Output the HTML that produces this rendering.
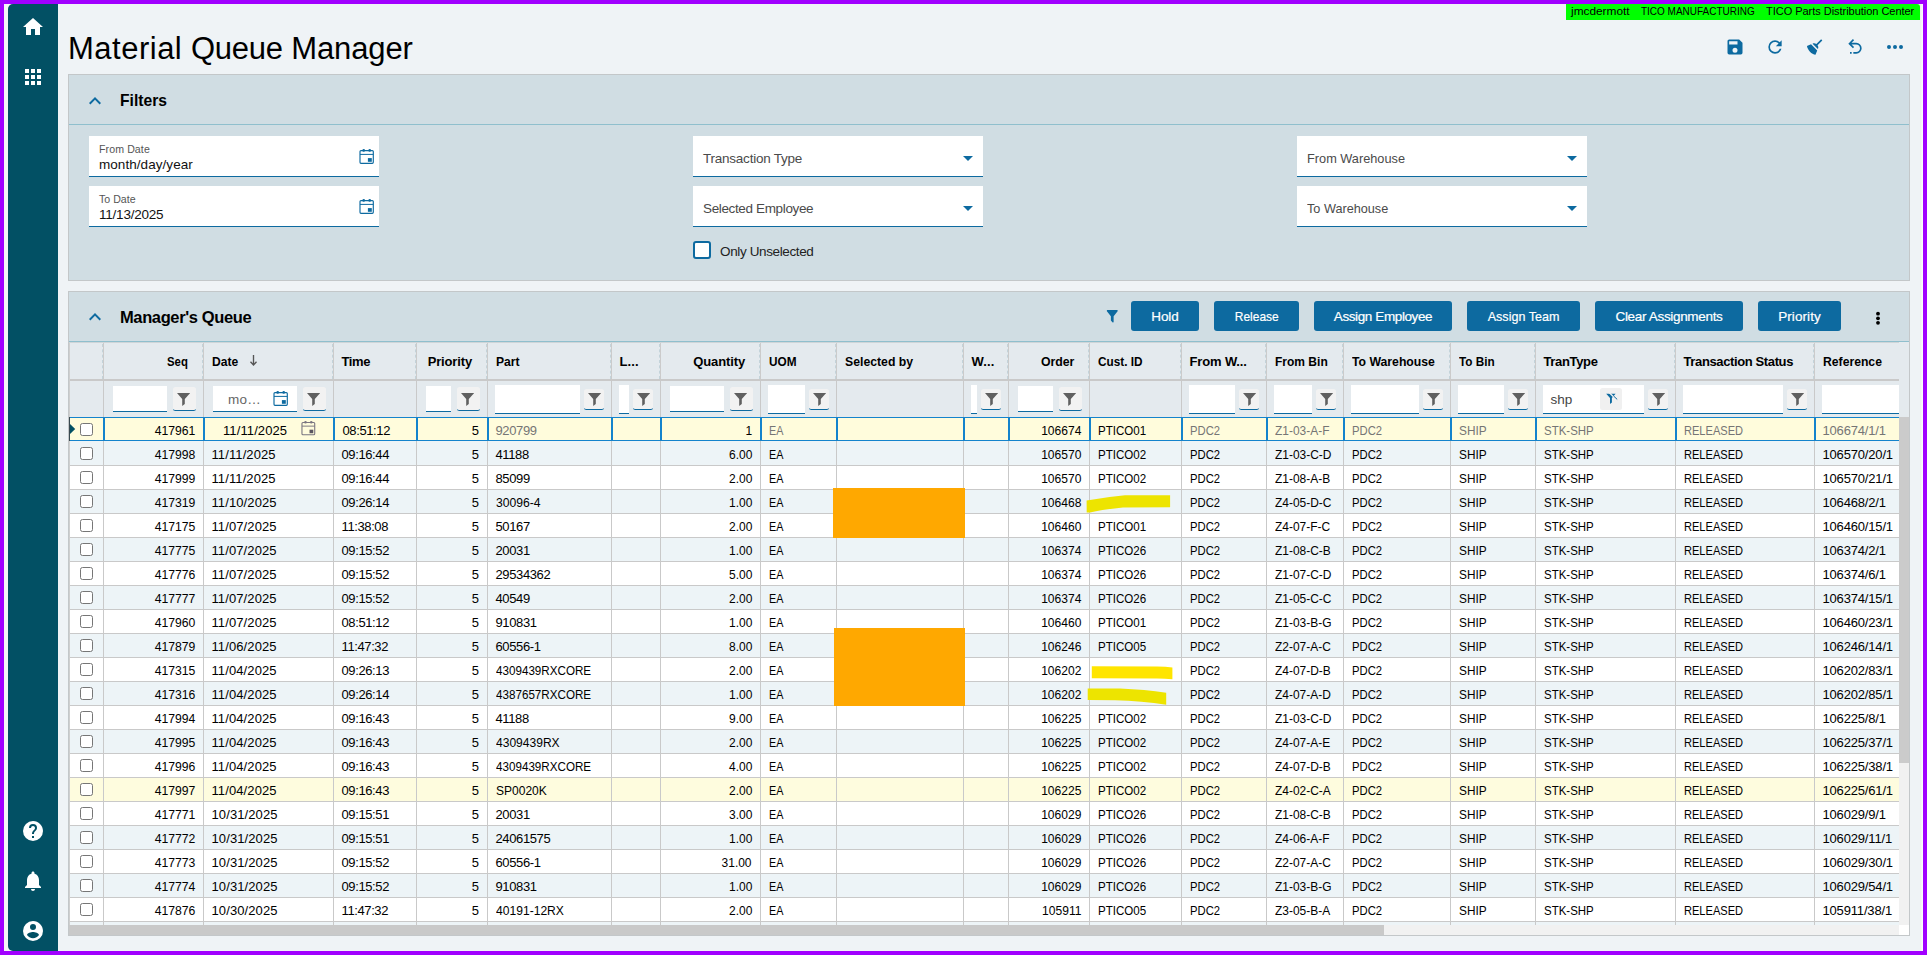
<!DOCTYPE html>
<html lang="en"><head><meta charset="utf-8"><title>Material Queue Manager</title>
<style>
*{box-sizing:border-box;margin:0;padding:0}
html,body{width:1927px;height:955px;overflow:hidden}
body{position:relative;background:#a100ff;font-family:"Liberation Sans",sans-serif;color:#000;font-size:13px}
.abs{position:absolute}
#frame{position:absolute;left:4px;top:4px;width:1919px;height:947px;background:#f6f6f6;overflow:hidden}
#main{position:absolute;left:54px;top:0;width:1862px;height:947px;background:#eff3f6}
#side{position:absolute;left:4px;top:0;width:50px;height:947px;background:#025064;border-radius:5px 0 0 5px}
#side svg{position:absolute;fill:#fff}
#banner{position:absolute;left:1566px;top:4px;width:354px;height:16px;background:#00ff00;border-radius:0 3px 0 0;font-size:11px;line-height:15px;white-space:nowrap}
#banner span{position:absolute;top:0}
#title{position:absolute;left:68px;top:28.5px;font-size:31px;line-height:40px;white-space:nowrap}
.panel{position:absolute;left:68px;width:1842px;background:#d0dde3;border:1px solid #c3c7c9}
.ptitle{position:absolute;font-weight:bold;font-size:16.5px;white-space:nowrap}
.pline{position:absolute;left:69px;width:1840px;height:1px;background:#8fbfcd}
.field{position:absolute;width:290px;height:41px;background:#fff;border-bottom:1px solid #0d6aa0}
.field .lab{position:absolute;left:10px;top:7px;font-size:10.6px;line-height:12px;color:#555;white-space:nowrap}
.field .val{position:absolute;left:10px;top:20.5px;font-size:13.5px;line-height:16px;color:#111;white-space:nowrap}
.field .ph{position:absolute;left:10px;top:14px;font-size:13.5px;line-height:18px;color:#4a4a4a;white-space:nowrap}
.field svg{position:absolute}
.btn{position:absolute;top:301px;height:30px;background:#0d6aa0;border-radius:3px;color:#fff;font-size:13.5px;line-height:32px;text-align:center;white-space:nowrap;overflow:hidden;-webkit-text-stroke:0.2px #fff}
#grid{position:absolute;left:70px;top:342px;width:1829px;height:583px;overflow:hidden;background:#fff}
.hrow{position:absolute;left:0;top:0;width:1900px;height:39px;background:#e4eaee;border-bottom:2px solid #c9c9c9}
.hc{position:absolute;top:0;height:37px;border-right:1px solid #cbcbcb;line-height:37px;font-weight:bold;font-size:13px;padding:1px 15px 0 7.5px;white-space:nowrap;overflow:hidden}
.hc.r{text-align:right}
.hc .sort{position:absolute;left:45.8px;top:13px}
.frow{position:absolute;left:0;top:39px;width:1900px;height:36px;background:#e4eaee}
.fc{position:absolute;top:0;height:36px;border-right:1px solid #c9c9c9}
.fi{position:absolute;background:#fff;border-bottom:1px solid #0d6aa0}
.fb{position:absolute;background:#f2f2f2;border-bottom:1px solid #0d6aa0;border-radius:2.5px;overflow:hidden}
.fb svg,.fi svg{position:absolute}
.row{position:absolute;left:0;width:1900px;height:24px}
.row.wh{background:#fff}.row.alt{background:#edf4f7}.row.hov{background:#fefcde}.row.sel{background:#fffcdc}
.c{position:absolute;top:0;height:24px;border-right:1px solid #c9c9c9;border-top:1px solid #c9c9c9;line-height:24px;padding:1px 8px 0 7.5px;white-space:nowrap;overflow:hidden;font-size:13px}
.row.first .c{border-top:0;padding-top:2px}
.c.r{text-align:right;padding-right:8px}
.cb{position:absolute;left:10px;top:5px;width:13px;height:13px;border:1px solid #767676;border-radius:2.5px;background:#fff}
.row.first .cb{top:6px}
.row.sel .c{border-top:1px solid #1483cc;border-bottom:1px solid #1483cc;border-right:1px solid #1483cc;border-left:1px solid #1483cc;line-height:22px;padding:2px 8px 0 7.5px;color:#757575}
.row.sel .c.c0{border-left:0}
.row.sel .cb{top:5px;left:10px}
.row.sel .c .t{margin-left:-1px}
.row.sel .c.r .t{margin-left:0}
.row.sel .c.k{color:#000}
.cal2{position:absolute;left:96px;top:3.6px}
.t{transform-origin:0 50%}
.r .t{transform-origin:100% 50%}
.btn .t{transform-origin:50% 50%}
.hc::after{content:'';position:absolute;right:0;top:2px;bottom:0;width:0;border-right:1px dashed #c3d3da}

.k-title{letter-spacing:-0.015px}
.k-ptf{display:inline-block;transform:scaleX(0.9473)}
.k-ptm{letter-spacing:-0.378px}
.k-lab0{letter-spacing:0.094px}
.k-lab1{letter-spacing:0.014px}
.k-val0{letter-spacing:0.057px}
.k-val1{letter-spacing:-0.22px}
.k-ph0{letter-spacing:-0.234px}
.k-ph1{letter-spacing:-0.358px}
.k-ph2{display:inline-block;transform:scaleX(0.9445)}
.k-ph3{display:inline-block;transform:scaleX(0.9385)}
.k-only{letter-spacing:-0.369px}
.k-b0{letter-spacing:-0.122px}
.k-b1{display:inline-block;transform:scaleX(0.8852)}
.k-b2{letter-spacing:-0.394px}
.k-b3{display:inline-block;transform:scaleX(0.9297)}
.k-b4{letter-spacing:-0.329px}
.k-b5{letter-spacing:0.083px}
.k-ban1{display:inline-block;transform:scaleX(1.0765)}
.k-ban2{display:inline-block;transform:scaleX(0.9071)}
.k-ban3{letter-spacing:-0.03px}
.k-h1{display:inline-block;transform:scaleX(0.8745)}
.k-h2{display:inline-block;transform:scaleX(0.9305)}
.k-h3{letter-spacing:-0.37px}
.k-h4{letter-spacing:-0.145px}
.k-h5{display:inline-block;transform:scaleX(0.934)}
.k-h6{letter-spacing:0.106px}
.k-h7{letter-spacing:-0.119px}
.k-h8{display:inline-block;transform:scaleX(0.9075)}
.k-h9{display:inline-block;transform:scaleX(0.9427)}
.k-h10{letter-spacing:0.136px}
.k-h11{display:inline-block;transform:scaleX(0.9468)}
.k-h12{display:inline-block;transform:scaleX(0.9066)}
.k-h13{letter-spacing:-0.138px}
.k-h14{display:inline-block;transform:scaleX(0.9241)}
.k-h15{display:inline-block;transform:scaleX(0.941)}
.k-h16{display:inline-block;transform:scaleX(0.9051)}
.k-h17{letter-spacing:-0.349px}
.k-h18{letter-spacing:-0.377px}
.k-h19{display:inline-block;transform:scaleX(0.9372)}
.k-d1{display:inline-block;transform:scaleX(0.9386)}
.k-d2{letter-spacing:0.107px}
.k-d3{letter-spacing:-0.387px}
.k-d5{letter-spacing:-0.372px}
.k-d7{display:inline-block;transform:scaleX(0.9217)}
.k-d8{display:inline-block;transform:scaleX(0.8285)}
.k-d11{display:inline-block;transform:scaleX(0.9271)}
.k-d12{display:inline-block;transform:scaleX(0.8903)}
.k-d13{display:inline-block;transform:scaleX(0.8664)}
.k-d14{display:inline-block;transform:scaleX(0.919)}
.k-d15{display:inline-block;transform:scaleX(0.8664)}
.k-d16{display:inline-block;transform:scaleX(0.9108)}
.k-d17{display:inline-block;transform:scaleX(0.8829)}
.k-d18{display:inline-block;transform:scaleX(0.8513)}
.k-d19{letter-spacing:-0.17px}
.k-p0{display:inline-block;transform:scaleX(0.8956)}
.k-p1{display:inline-block;transform:scaleX(0.8956)}
.k-p2{display:inline-block;transform:scaleX(0.9266)}
.k-p3{display:inline-block;transform:scaleX(0.9252)}
.k-p4{display:inline-block;transform:scaleX(0.9305)}
.k-p5{letter-spacing:-0.386px}
.k-p6{display:inline-block;transform:scaleX(0.9352)}
.k-p7{letter-spacing:-0.378px}
.k-p8{letter-spacing:-0.378px}
</style></head><body>
<div id="frame"><div class="abs" style="left:1916px;top:0;width:3px;height:947px;background:linear-gradient(90deg,#eee,#fff)"></div><div id="main"></div><div id="side">
</div></div>
<svg class="abs" style="left:21px;top:15px" width="24" height="24" viewBox="0 0 24 24" ><path fill="#fff" d="M10,20V14H14V20H19V12H22L12,3L2,12H5V20H10Z"/></svg>
<svg class="abs" style="left:21px;top:65px" width="24" height="24" viewBox="0 0 24 24" ><path fill="#fff" d="M16,20H20V16H16M16,14H20V10H16M10,8H14V4H10M16,8H20V4H16M10,14H14V10H10M4,14H8V10H4M4,20H8V16H4M10,20H14V16H10M4,8H8V4H4V8Z"/></svg>
<svg class="abs" style="left:21px;top:819px" width="24" height="24" viewBox="0 0 24 24" ><path fill="#fff" d="M15.07,11.25L14.17,12.17C13.45,12.89 13,13.5 13,15H11V14.5C11,13.39 11.45,12.39 12.17,11.67L13.41,10.41C13.78,10.05 14,9.55 14,9C14,7.89 13.1,7 12,7A2,2 0 0,0 10,9H8A4,4 0 0,1 12,5A4,4 0 0,1 16,9C16,9.88 15.64,10.67 15.07,11.25M13,19H11V17H13M12,2A10,10 0 0,0 2,12A10,10 0 0,0 12,22A10,10 0 0,0 22,12C22,6.47 17.5,2 12,2Z"/></svg>
<svg class="abs" style="left:21px;top:868.5px" width="24" height="24" viewBox="0 0 24 24" ><path fill="#fff" d="M12 22c1.1 0 2-.9 2-2h-4c0 1.1.89 2 2 2zm6-6v-5c0-3.07-1.64-5.64-4.5-6.32V4c0-.83-.67-1.5-1.5-1.5s-1.5.67-1.5 1.5v.68C7.63 5.36 6 7.92 6 11v5l-2 2v1h16v-1l-2-2z"/></svg>
<svg class="abs" style="left:21px;top:918.5px" width="24" height="24" viewBox="0 0 24 24" ><path fill="#fff" d="M12,19.2C9.5,19.2 7.29,17.92 6,16C6.03,14 10,12.9 12,12.9C14,12.9 17.97,14 18,16C16.71,17.92 14.5,19.2 12,19.2M12,5A3,3 0 0,1 15,8A3,3 0 0,1 12,11A3,3 0 0,1 9,8A3,3 0 0,1 12,5M12,2A10,10 0 0,0 2,12A10,10 0 0,0 12,22A10,10 0 0,0 22,12C22,6.47 17.5,2 12,2Z"/></svg>
<div id="banner"><span class="t k-ban1" style="left:5px">jmcdermott</span><span class="t k-ban2" style="left:75px">TICO MANUFACTURING</span><span class="t k-ban3" style="left:200px">TICO Parts Distribution Center</span></div>
<div id="title"><span style="letter-spacing:0.5px">Material</span> <span style="letter-spacing:-0.25px">Queue</span> <span style="letter-spacing:-0.15px">Manager</span></div>
<svg class="abs" style="left:1725px;top:37.2px" width="20" height="20" viewBox="0 0 24 24" ><path fill="#0d6aa0" d="M15,9H5V5H15M12,19A3,3 0 0,1 9,16A3,3 0 0,1 12,13A3,3 0 0,1 15,16A3,3 0 0,1 12,19M17,3H5C3.89,3 3,3.9 3,5V19A2,2 0 0,0 5,21H19A2,2 0 0,0 21,19V7L17,3Z"/></svg>
<svg class="abs" style="left:1765px;top:37.2px" width="20" height="20" viewBox="0 0 24 24" ><path fill="#0d6aa0" d="M17.65,6.35C16.2,4.9 14.21,4 12,4A8,8 0 0,0 4,12A8,8 0 0,0 12,20C15.73,20 18.84,17.45 19.73,14H17.65C16.83,16.33 14.61,18 12,18A6,6 0 0,1 6,12A6,6 0 0,1 12,6C13.66,6 15.14,6.69 16.22,7.78L13,11H20V4L17.65,6.35Z"/></svg>
<svg class="abs" style="left:1805px;top:37.2px" width="20" height="20" viewBox="0 0 24 24" ><path fill="#0d6aa0" d="M19.36,2.72L20.78,4.14L15.06,9.85C16.13,11.39 16.28,13.24 15.38,14.44L9.06,8.12C10.26,7.22 12.11,7.37 13.65,8.44L19.36,2.72M5.93,17.57C3.92,15.56 2.69,13.16 2.35,10.92L7.23,8.83L14.67,16.27L12.58,21.15C10.34,20.81 7.94,19.58 5.93,17.57Z"/></svg>
<svg class="abs" style="left:1845px;top:37.2px" width="20" height="20" viewBox="0 0 24 24" ><path fill="#0d6aa0" d="M13.5,7A6.5,6.5 0 0,1 20,13.5A6.5,6.5 0 0,1 13.5,20H10V18H13.5C16,18 18,16 18,13.5C18,11 16,9 13.5,9H7.83L10.91,12.09L9.5,13.5L4,8L9.5,2.5L10.92,3.91L7.83,7H13.5M6,18H8V20H6V18Z"/></svg>
<svg class="abs" style="left:1883px;top:35px" width="24" height="24" viewBox="0 0 24 24" ><path fill="#0d6aa0" d="M16,12A2,2 0 0,1 18,10A2,2 0 0,1 20,12A2,2 0 0,1 18,14A2,2 0 0,1 16,12M10,12A2,2 0 0,1 12,10A2,2 0 0,1 14,12A2,2 0 0,1 12,14A2,2 0 0,1 10,12M4,12A2,2 0 0,1 6,10A2,2 0 0,1 8,12A2,2 0 0,1 6,14A2,2 0 0,1 4,12Z"/></svg>
<div class="panel" style="top:74px;height:207px"></div>
<svg class="abs" style="left:83.3px;top:88.6px" width="24" height="24" viewBox="0 0 24 24" ><path fill="#0d6aa0" d="M7.41,15.41L12,10.83L16.59,15.41L18,14L12,8L6,14L7.41,15.41Z"/></svg>
<div class="ptitle" style="left:120px;top:90px;line-height:20px"><span class="t k-ptf">Filters</span></div>
<div class="pline" style="top:124px"></div>
<div class="field" style="left:89px;top:136px"><span class="lab"><span class="t k-lab0">From Date</span></span><span class="val"><span class="t k-val0">month/day/year</span></span></div>
<svg class="abs" style="left:359px;top:148px" width="15.5" height="16.5" viewBox="0 0 15.5 16.5"><rect x="1" y="2.55" width="13.3" height="12.8" rx="1" fill="none" stroke="#0d6aa0" stroke-width="1.15"/><path d="M1 6.4h13.3" stroke="#0d6aa0" stroke-width="1"/><circle cx="4.7" cy="2.4" r="1.35" fill="#0d6aa0"/><circle cx="10.7" cy="2.4" r="1.35" fill="#0d6aa0"/><rect x="8.9" y="10.1" width="3.9" height="3.7" fill="#0d6aa0"/></svg>
<div class="field" style="left:89px;top:186px"><span class="lab"><span class="t k-lab1">To Date</span></span><span class="val"><span class="t k-val1">11/13/2025</span></span></div>
<svg class="abs" style="left:359px;top:198px" width="15.5" height="16.5" viewBox="0 0 15.5 16.5"><rect x="1" y="2.55" width="13.3" height="12.8" rx="1" fill="none" stroke="#0d6aa0" stroke-width="1.15"/><path d="M1 6.4h13.3" stroke="#0d6aa0" stroke-width="1"/><circle cx="4.7" cy="2.4" r="1.35" fill="#0d6aa0"/><circle cx="10.7" cy="2.4" r="1.35" fill="#0d6aa0"/><rect x="8.9" y="10.1" width="3.9" height="3.7" fill="#0d6aa0"/></svg>
<div class="field" style="left:693px;top:136px"><span class="ph"><span class="t k-ph0">Transaction Type</span></span></div>
<svg class="abs" style="left:956.4px;top:145.5px" width="24" height="24" viewBox="0 0 24 24" ><path fill="#0d6aa0" d="M7,10L12,15L17,10H7Z"/></svg>
<div class="field" style="left:693px;top:186px"><span class="ph"><span class="t k-ph1">Selected Employee</span></span></div>
<svg class="abs" style="left:956.4px;top:195.5px" width="24" height="24" viewBox="0 0 24 24" ><path fill="#0d6aa0" d="M7,10L12,15L17,10H7Z"/></svg>
<div class="field" style="left:1297px;top:136px"><span class="ph"><span class="t k-ph2">From Warehouse</span></span></div>
<svg class="abs" style="left:1560.4px;top:145.5px" width="24" height="24" viewBox="0 0 24 24" ><path fill="#0d6aa0" d="M7,10L12,15L17,10H7Z"/></svg>
<div class="field" style="left:1297px;top:186px"><span class="ph"><span class="t k-ph3">To Warehouse</span></span></div>
<svg class="abs" style="left:1560.4px;top:195.5px" width="24" height="24" viewBox="0 0 24 24" ><path fill="#0d6aa0" d="M7,10L12,15L17,10H7Z"/></svg>
<div class="abs" style="left:693px;top:241px;width:18px;height:18px;border:2px solid #0d6aa0;border-radius:3px;background:#fff"></div>
<div class="abs" style="left:720px;top:242.5px;line-height:18px;font-size:13.5px;color:#222;white-space:nowrap"><span class="t k-only">Only Unselected</span></div>
<div class="panel" style="top:291px;height:645px"></div>
<svg class="abs" style="left:83.3px;top:305.3px" width="24" height="24" viewBox="0 0 24 24" ><path fill="#0d6aa0" d="M7.41,15.41L12,10.83L16.59,15.41L18,14L12,8L6,14L7.41,15.41Z"/></svg>
<div class="ptitle" style="left:120px;top:307px;line-height:20px"><span class="t k-ptm">Manager's Queue</span></div>
<div class="pline" style="top:341px"></div>
<svg class="abs" style="left:1104.3px;top:308.2px" width="16.5" height="16.5" viewBox="0 0 24 24" ><path fill="#0d6aa0" d="M14,12V19.88C14.04,20.18 13.94,20.5 13.71,20.71C13.32,21.1 12.69,21.1 12.3,20.71L10.29,18.7C10.06,18.47 9.96,18.16 10,17.87V12H9.97L4.21,4.62C3.87,4.19 3.95,3.56 4.38,3.22C4.57,3.08 4.78,3 5,3V3H19V3C19.22,3 19.43,3.08 19.62,3.22C20.05,3.56 20.13,4.19 19.79,4.62L14.03,12H14Z"/></svg>
<div class="btn" style="left:1131px;width:68px"><span class="t k-b0">Hold</span></div>
<div class="btn" style="left:1214px;width:85px"><span class="t k-b1">Release</span></div>
<div class="btn" style="left:1314px;width:138px"><span class="t k-b2">Assign Employee</span></div>
<div class="btn" style="left:1467px;width:113px"><span class="t k-b3">Assign Team</span></div>
<div class="btn" style="left:1595px;width:148px"><span class="t k-b4">Clear Assignments</span></div>
<div class="btn" style="left:1758px;width:83px"><span class="t k-b5">Priority</span></div>
<svg class="abs" style="left:1870px;top:308px" width="16" height="20" viewBox="0 0 16 20"><circle cx="8" cy="5.7" r="1.9" fill="#000"/><circle cx="8" cy="10.3" r="1.9" fill="#000"/><circle cx="8" cy="14.8" r="1.9" fill="#000"/></svg>
<div class="abs" style="left:69px;top:342px;width:1px;height:583px;background:#cfcfcf"></div>
<div class="abs" style="left:69px;top:417px;width:1px;height:24px;background:#3a4a50"></div>
<div id="grid">
<div class="hrow">
<div class="hc" style="left:0px;width:34px"><span class="t k-h0"></span></div>
<div class="hc r" style="left:34px;width:100px"><span class="t k-h1">Seq</span></div>
<div class="hc" style="left:134px;width:130px"><span class="t k-h2">Date</span><svg class="sort" width="7" height="11" viewBox="0 0 7 11"><path d="M3.5 0V10M0.5 6.8L3.5 10L6.5 6.8" fill="none" stroke="#555" stroke-width="1.35"/></svg></div>
<div class="hc" style="left:264px;width:83px"><span class="t k-h3">Time</span></div>
<div class="hc r" style="left:347px;width:71px"><span class="t k-h4">Priority</span></div>
<div class="hc" style="left:418px;width:124px"><span class="t k-h5">Part</span></div>
<div class="hc" style="left:542px;width:49px"><span class="t k-h6">L...</span></div>
<div class="hc r" style="left:591px;width:100px"><span class="t k-h7">Quantity</span></div>
<div class="hc" style="left:691px;width:76px"><span class="t k-h8">UOM</span></div>
<div class="hc" style="left:767px;width:127px"><span class="t k-h9">Selected by</span></div>
<div class="hc" style="left:894px;width:45px"><span class="t k-h10">W...</span></div>
<div class="hc r" style="left:939px;width:81px"><span class="t k-h11">Order</span></div>
<div class="hc" style="left:1020px;width:92px"><span class="t k-h12">Cust. ID</span></div>
<div class="hc" style="left:1112px;width:85px"><span class="t k-h13">From W...</span></div>
<div class="hc" style="left:1197px;width:77px"><span class="t k-h14">From Bin</span></div>
<div class="hc" style="left:1274px;width:107px"><span class="t k-h15">To Warehouse</span></div>
<div class="hc" style="left:1381px;width:85px"><span class="t k-h16">To Bin</span></div>
<div class="hc" style="left:1466px;width:140px"><span class="t k-h17">TranType</span></div>
<div class="hc" style="left:1606px;width:139px"><span class="t k-h18">Transaction Status</span></div>
<div class="hc" style="left:1745px;width:140px"><span class="t k-h19">Reference</span></div>
</div>
<div class="frow">
<div class="fc" style="left:0px;width:34px"></div>
<div class="fc" style="left:34px;width:100px"></div>
<div class="fc" style="left:134px;width:130px"></div>
<div class="fc" style="left:264px;width:83px"></div>
<div class="fc" style="left:347px;width:71px"></div>
<div class="fc" style="left:418px;width:124px"></div>
<div class="fc" style="left:542px;width:49px"></div>
<div class="fc" style="left:591px;width:100px"></div>
<div class="fc" style="left:691px;width:76px"></div>
<div class="fc" style="left:767px;width:127px"></div>
<div class="fc" style="left:894px;width:45px"></div>
<div class="fc" style="left:939px;width:81px"></div>
<div class="fc" style="left:1020px;width:92px"></div>
<div class="fc" style="left:1112px;width:85px"></div>
<div class="fc" style="left:1197px;width:77px"></div>
<div class="fc" style="left:1274px;width:107px"></div>
<div class="fc" style="left:1381px;width:85px"></div>
<div class="fc" style="left:1466px;width:140px"></div>
<div class="fc" style="left:1606px;width:139px"></div>
<div class="fc" style="left:1745px;width:140px"></div>
<div class="fi" style="left:43px;top:5px;width:54px;height:26px"></div>
<div class="fb" style="left:103px;top:6px;width:23px;height:24px"><svg class="abs" style="left:3.9px;top:5.9px" width="22" height="22" viewBox="0 0 22 22"><path d="M0 0H13.2L7.8 6V11.1L5.2 13V6Z" fill="#606060"/></svg></div>
<div class="fi" style="left:143px;top:5px;width:84px;height:26px"><span style="position:absolute;left:15px;top:6px;font-size:13.5px;line-height:16px;color:#666;letter-spacing:0.2px">mo…</span><svg class="abs" style="left:60px;top:3.9px" width="15.5" height="16.5" viewBox="0 0 15.5 16.5"><rect x="1" y="2.55" width="13.3" height="12.8" rx="1" fill="none" stroke="#0d6aa0" stroke-width="1.15"/><path d="M1 6.4h13.3" stroke="#0d6aa0" stroke-width="1"/><circle cx="4.7" cy="2.4" r="1.35" fill="#0d6aa0"/><circle cx="10.7" cy="2.4" r="1.35" fill="#0d6aa0"/><rect x="8.9" y="10.1" width="3.9" height="3.7" fill="#0d6aa0"/></svg></div>
<div class="fb" style="left:233px;top:6px;width:23px;height:24px"><svg class="abs" style="left:3.9px;top:5.9px" width="22" height="22" viewBox="0 0 22 22"><path d="M0 0H13.2L7.8 6V11.1L5.2 13V6Z" fill="#606060"/></svg></div>
<div class="fi" style="left:356px;top:5px;width:25px;height:26px"></div>
<div class="fb" style="left:387px;top:6px;width:23px;height:24px"><svg class="abs" style="left:3.9px;top:5.9px" width="22" height="22" viewBox="0 0 22 22"><path d="M0 0H13.2L7.8 6V11.1L5.2 13V6Z" fill="#606060"/></svg></div>
<div class="fi" style="left:425px;top:4px;width:85px;height:29px"></div>
<div class="fb" style="left:514px;top:8px;width:20px;height:21px"><svg class="abs" style="left:3.9px;top:3.9px" width="22" height="22" viewBox="0 0 22 22"><path d="M0 0H13.2L7.8 6V11.1L5.2 13V6Z" fill="#606060"/></svg></div>
<div class="fi" style="left:549px;top:4px;width:10px;height:29px"></div>
<div class="fb" style="left:563px;top:8px;width:20px;height:21px"><svg class="abs" style="left:3.9px;top:3.9px" width="22" height="22" viewBox="0 0 22 22"><path d="M0 0H13.2L7.8 6V11.1L5.2 13V6Z" fill="#606060"/></svg></div>
<div class="fi" style="left:600px;top:5px;width:54px;height:26px"></div>
<div class="fb" style="left:660px;top:6px;width:23px;height:24px"><svg class="abs" style="left:3.9px;top:5.9px" width="22" height="22" viewBox="0 0 22 22"><path d="M0 0H13.2L7.8 6V11.1L5.2 13V6Z" fill="#606060"/></svg></div>
<div class="fi" style="left:698px;top:4px;width:37px;height:29px"></div>
<div class="fb" style="left:739px;top:8px;width:20px;height:21px"><svg class="abs" style="left:3.9px;top:3.9px" width="22" height="22" viewBox="0 0 22 22"><path d="M0 0H13.2L7.8 6V11.1L5.2 13V6Z" fill="#606060"/></svg></div>
<div class="fi" style="left:901px;top:4px;width:6px;height:29px"></div>
<div class="fb" style="left:911px;top:8px;width:20px;height:21px"><svg class="abs" style="left:3.9px;top:3.9px" width="22" height="22" viewBox="0 0 22 22"><path d="M0 0H13.2L7.8 6V11.1L5.2 13V6Z" fill="#606060"/></svg></div>
<div class="fi" style="left:948px;top:5px;width:35px;height:26px"></div>
<div class="fb" style="left:989px;top:6px;width:23px;height:24px"><svg class="abs" style="left:3.9px;top:5.9px" width="22" height="22" viewBox="0 0 22 22"><path d="M0 0H13.2L7.8 6V11.1L5.2 13V6Z" fill="#606060"/></svg></div>
<div class="fi" style="left:1119px;top:4px;width:46px;height:29px"></div>
<div class="fb" style="left:1169px;top:8px;width:20px;height:21px"><svg class="abs" style="left:3.9px;top:3.9px" width="22" height="22" viewBox="0 0 22 22"><path d="M0 0H13.2L7.8 6V11.1L5.2 13V6Z" fill="#606060"/></svg></div>
<div class="fi" style="left:1204px;top:4px;width:38px;height:29px"></div>
<div class="fb" style="left:1246px;top:8px;width:20px;height:21px"><svg class="abs" style="left:3.9px;top:3.9px" width="22" height="22" viewBox="0 0 22 22"><path d="M0 0H13.2L7.8 6V11.1L5.2 13V6Z" fill="#606060"/></svg></div>
<div class="fi" style="left:1281px;top:4px;width:68px;height:29px"></div>
<div class="fb" style="left:1353px;top:8px;width:20px;height:21px"><svg class="abs" style="left:3.9px;top:3.9px" width="22" height="22" viewBox="0 0 22 22"><path d="M0 0H13.2L7.8 6V11.1L5.2 13V6Z" fill="#606060"/></svg></div>
<div class="fi" style="left:1388px;top:4px;width:46px;height:29px"></div>
<div class="fb" style="left:1438px;top:8px;width:20px;height:21px"><svg class="abs" style="left:3.9px;top:3.9px" width="22" height="22" viewBox="0 0 22 22"><path d="M0 0H13.2L7.8 6V11.1L5.2 13V6Z" fill="#606060"/></svg></div>
<div class="fi" style="left:1473px;top:4px;width:101px;height:29px"><span style="position:absolute;left:7.5px;top:6.5px;font-size:13.5px;line-height:16px;color:#444">shp</span><i style="position:absolute;left:57px;top:3px;width:22px;height:22px;background:#f0f0f0;border-radius:2.5px"></i><svg class="abs" style="left:57px;top:3px" width="22" height="22" viewBox="0 0 22 22"><path d="M6.2 5.8H15.6L11.9 10V14.4L10 15.9V10Z" fill="#0d6aa0"/><path d="M8.8 4.2L15 10.2" stroke="#f0f0f0" stroke-width="1.3"/><path d="M13.6 8L17.2 11.4" stroke="#0d6aa0" stroke-width="1"/></svg></div>
<div class="fb" style="left:1578px;top:8px;width:20px;height:21px"><svg class="abs" style="left:3.9px;top:3.9px" width="22" height="22" viewBox="0 0 22 22"><path d="M0 0H13.2L7.8 6V11.1L5.2 13V6Z" fill="#606060"/></svg></div>
<div class="fi" style="left:1613px;top:4px;width:100px;height:29px"></div>
<div class="fb" style="left:1717px;top:8px;width:20px;height:21px"><svg class="abs" style="left:3.9px;top:3.9px" width="22" height="22" viewBox="0 0 22 22"><path d="M0 0H13.2L7.8 6V11.1L5.2 13V6Z" fill="#606060"/></svg></div>
<div class="fi" style="left:1752px;top:4px;width:148px;height:29px"></div>
</div>
<div class="row sel" style="top:75px">
<div class="c c0" style="left:0;width:34px"><svg class="abs" style="left:0;top:5.5px" width="6" height="10" viewBox="0 0 6 10"><path d="M0 0L5.2 5L0 10Z" fill="#025064"/></svg><i class="cb"></i></div>
<div class="c c1 r k" style="left:34px;width:100px;"><span class="t k-d1">417961</span></div>
<div class="c c2 k" style="left:134px;width:130px;padding-left:19px;"><span class="t k-d2">11/11/2025</span><svg class="abs cal2x" style="left:96.3px;top:1.8px" width="14.88" height="15.84" viewBox="0 0 15.5 16.5"><rect x="1" y="2.55" width="13.3" height="12.8" rx="1" fill="none" stroke="#7a7580" stroke-width="1.15"/><path d="M1 6.4h13.3" stroke="#7a7580" stroke-width="1"/><circle cx="4.7" cy="2.4" r="1.35" fill="#7a7580"/><circle cx="10.7" cy="2.4" r="1.35" fill="#7a7580"/><rect x="8.9" y="10.1" width="3.9" height="3.7" fill="#5a5560"/></svg></div>
<div class="c c3 k" style="left:264px;width:83px;padding-left:8.5px;"><span class="t k-d3">08:51:12</span></div>
<div class="c c4 r k" style="left:347px;width:71px;"><span class="t k-d4">5</span></div>
<div class="c c5" style="left:418px;width:124px;"><span class="t k-d5">920799</span></div>
<div class="c c6" style="left:542px;width:49px;"><span class="t k-d6"></span></div>
<div class="c c7 r k" style="left:591px;width:100px;"><span class="t k-d7">1</span></div>
<div class="c c8" style="left:691px;width:76px;"><span class="t k-d8">EA</span></div>
<div class="c c9" style="left:767px;width:127px;"><span class="t k-d9"></span></div>
<div class="c c10" style="left:894px;width:45px;"><span class="t k-d10"></span></div>
<div class="c c11 r k" style="left:939px;width:81px;"><span class="t k-d11">106674</span></div>
<div class="c c12 k" style="left:1020px;width:92px;"><span class="t k-d12">PTICO01</span></div>
<div class="c c13" style="left:1112px;width:85px;"><span class="t k-d13">PDC2</span></div>
<div class="c c14" style="left:1197px;width:77px;"><span class="t k-d14">Z1-03-A-F</span></div>
<div class="c c15" style="left:1274px;width:107px;"><span class="t k-d15">PDC2</span></div>
<div class="c c16" style="left:1381px;width:85px;"><span class="t k-d16">SHIP</span></div>
<div class="c c17" style="left:1466px;width:140px;"><span class="t k-d17">STK-SHP</span></div>
<div class="c c18" style="left:1606px;width:139px;"><span class="t k-d18">RELEASED</span></div>
<div class="c c19" style="left:1745px;width:140px;"><span class="t k-d19">106674/1/1</span></div>
</div>
<div class="row alt first" style="top:99px">
<div class="c c0" style="left:0;width:34px"><i class="cb"></i></div>
<div class="c c1 r" style="left:34px;width:100px;"><span class="t k-d1">417998</span></div>
<div class="c c2" style="left:134px;width:130px;"><span class="t k-d2">11/11/2025</span></div>
<div class="c c3" style="left:264px;width:83px;"><span class="t k-d3">09:16:44</span></div>
<div class="c c4 r" style="left:347px;width:71px;"><span class="t k-d4">5</span></div>
<div class="c c5" style="left:418px;width:124px;"><span class="t k-d5">41188</span></div>
<div class="c c6" style="left:542px;width:49px;"><span class="t k-d6"></span></div>
<div class="c c7 r" style="left:591px;width:100px;"><span class="t k-d7">6.00</span></div>
<div class="c c8" style="left:691px;width:76px;"><span class="t k-d8">EA</span></div>
<div class="c c9" style="left:767px;width:127px;"><span class="t k-d9"></span></div>
<div class="c c10" style="left:894px;width:45px;"><span class="t k-d10"></span></div>
<div class="c c11 r" style="left:939px;width:81px;"><span class="t k-d11">106570</span></div>
<div class="c c12" style="left:1020px;width:92px;"><span class="t k-d12">PTICO02</span></div>
<div class="c c13" style="left:1112px;width:85px;"><span class="t k-d13">PDC2</span></div>
<div class="c c14" style="left:1197px;width:77px;"><span class="t k-d14">Z1-03-C-D</span></div>
<div class="c c15" style="left:1274px;width:107px;"><span class="t k-d15">PDC2</span></div>
<div class="c c16" style="left:1381px;width:85px;"><span class="t k-d16">SHIP</span></div>
<div class="c c17" style="left:1466px;width:140px;"><span class="t k-d17">STK-SHP</span></div>
<div class="c c18" style="left:1606px;width:139px;"><span class="t k-d18">RELEASED</span></div>
<div class="c c19" style="left:1745px;width:140px;"><span class="t k-d19">106570/20/1</span></div>
</div>
<div class="row wh" style="top:123px">
<div class="c c0" style="left:0;width:34px"><i class="cb"></i></div>
<div class="c c1 r" style="left:34px;width:100px;"><span class="t k-d1">417999</span></div>
<div class="c c2" style="left:134px;width:130px;"><span class="t k-d2">11/11/2025</span></div>
<div class="c c3" style="left:264px;width:83px;"><span class="t k-d3">09:16:44</span></div>
<div class="c c4 r" style="left:347px;width:71px;"><span class="t k-d4">5</span></div>
<div class="c c5" style="left:418px;width:124px;"><span class="t k-d5">85099</span></div>
<div class="c c6" style="left:542px;width:49px;"><span class="t k-d6"></span></div>
<div class="c c7 r" style="left:591px;width:100px;"><span class="t k-d7">2.00</span></div>
<div class="c c8" style="left:691px;width:76px;"><span class="t k-d8">EA</span></div>
<div class="c c9" style="left:767px;width:127px;"><span class="t k-d9"></span></div>
<div class="c c10" style="left:894px;width:45px;"><span class="t k-d10"></span></div>
<div class="c c11 r" style="left:939px;width:81px;"><span class="t k-d11">106570</span></div>
<div class="c c12" style="left:1020px;width:92px;"><span class="t k-d12">PTICO02</span></div>
<div class="c c13" style="left:1112px;width:85px;"><span class="t k-d13">PDC2</span></div>
<div class="c c14" style="left:1197px;width:77px;"><span class="t k-d14">Z1-08-A-B</span></div>
<div class="c c15" style="left:1274px;width:107px;"><span class="t k-d15">PDC2</span></div>
<div class="c c16" style="left:1381px;width:85px;"><span class="t k-d16">SHIP</span></div>
<div class="c c17" style="left:1466px;width:140px;"><span class="t k-d17">STK-SHP</span></div>
<div class="c c18" style="left:1606px;width:139px;"><span class="t k-d18">RELEASED</span></div>
<div class="c c19" style="left:1745px;width:140px;"><span class="t k-d19">106570/21/1</span></div>
</div>
<div class="row alt" style="top:147px">
<div class="c c0" style="left:0;width:34px"><i class="cb"></i></div>
<div class="c c1 r" style="left:34px;width:100px;"><span class="t k-d1">417319</span></div>
<div class="c c2" style="left:134px;width:130px;"><span class="t k-d2">11/10/2025</span></div>
<div class="c c3" style="left:264px;width:83px;"><span class="t k-d3">09:26:14</span></div>
<div class="c c4 r" style="left:347px;width:71px;"><span class="t k-d4">5</span></div>
<div class="c c5" style="left:418px;width:124px;"><span class="t k-p6">30096-4</span></div>
<div class="c c6" style="left:542px;width:49px;"><span class="t k-d6"></span></div>
<div class="c c7 r" style="left:591px;width:100px;"><span class="t k-d7">1.00</span></div>
<div class="c c8" style="left:691px;width:76px;"><span class="t k-d8">EA</span></div>
<div class="c c9" style="left:767px;width:127px;"><span class="t k-d9"></span></div>
<div class="c c10" style="left:894px;width:45px;"><span class="t k-d10"></span></div>
<div class="c c11 r" style="left:939px;width:81px;"><span class="t k-d11">106468</span></div>
<div class="c c12" style="left:1020px;width:92px;"><span class="t k-d12"></span></div>
<div class="c c13" style="left:1112px;width:85px;"><span class="t k-d13">PDC2</span></div>
<div class="c c14" style="left:1197px;width:77px;"><span class="t k-d14">Z4-05-D-C</span></div>
<div class="c c15" style="left:1274px;width:107px;"><span class="t k-d15">PDC2</span></div>
<div class="c c16" style="left:1381px;width:85px;"><span class="t k-d16">SHIP</span></div>
<div class="c c17" style="left:1466px;width:140px;"><span class="t k-d17">STK-SHP</span></div>
<div class="c c18" style="left:1606px;width:139px;"><span class="t k-d18">RELEASED</span></div>
<div class="c c19" style="left:1745px;width:140px;"><span class="t k-d19">106468/2/1</span></div>
</div>
<div class="row wh" style="top:171px">
<div class="c c0" style="left:0;width:34px"><i class="cb"></i></div>
<div class="c c1 r" style="left:34px;width:100px;"><span class="t k-d1">417175</span></div>
<div class="c c2" style="left:134px;width:130px;"><span class="t k-d2">11/07/2025</span></div>
<div class="c c3" style="left:264px;width:83px;"><span class="t k-d3">11:38:08</span></div>
<div class="c c4 r" style="left:347px;width:71px;"><span class="t k-d4">5</span></div>
<div class="c c5" style="left:418px;width:124px;"><span class="t k-d5">50167</span></div>
<div class="c c6" style="left:542px;width:49px;"><span class="t k-d6"></span></div>
<div class="c c7 r" style="left:591px;width:100px;"><span class="t k-d7">2.00</span></div>
<div class="c c8" style="left:691px;width:76px;"><span class="t k-d8">EA</span></div>
<div class="c c9" style="left:767px;width:127px;"><span class="t k-d9"></span></div>
<div class="c c10" style="left:894px;width:45px;"><span class="t k-d10"></span></div>
<div class="c c11 r" style="left:939px;width:81px;"><span class="t k-d11">106460</span></div>
<div class="c c12" style="left:1020px;width:92px;"><span class="t k-d12">PTICO01</span></div>
<div class="c c13" style="left:1112px;width:85px;"><span class="t k-d13">PDC2</span></div>
<div class="c c14" style="left:1197px;width:77px;"><span class="t k-d14">Z4-07-F-C</span></div>
<div class="c c15" style="left:1274px;width:107px;"><span class="t k-d15">PDC2</span></div>
<div class="c c16" style="left:1381px;width:85px;"><span class="t k-d16">SHIP</span></div>
<div class="c c17" style="left:1466px;width:140px;"><span class="t k-d17">STK-SHP</span></div>
<div class="c c18" style="left:1606px;width:139px;"><span class="t k-d18">RELEASED</span></div>
<div class="c c19" style="left:1745px;width:140px;"><span class="t k-d19">106460/15/1</span></div>
</div>
<div class="row alt" style="top:195px">
<div class="c c0" style="left:0;width:34px"><i class="cb"></i></div>
<div class="c c1 r" style="left:34px;width:100px;"><span class="t k-d1">417775</span></div>
<div class="c c2" style="left:134px;width:130px;"><span class="t k-d2">11/07/2025</span></div>
<div class="c c3" style="left:264px;width:83px;"><span class="t k-d3">09:15:52</span></div>
<div class="c c4 r" style="left:347px;width:71px;"><span class="t k-d4">5</span></div>
<div class="c c5" style="left:418px;width:124px;"><span class="t k-d5">20031</span></div>
<div class="c c6" style="left:542px;width:49px;"><span class="t k-d6"></span></div>
<div class="c c7 r" style="left:591px;width:100px;"><span class="t k-d7">1.00</span></div>
<div class="c c8" style="left:691px;width:76px;"><span class="t k-d8">EA</span></div>
<div class="c c9" style="left:767px;width:127px;"><span class="t k-d9"></span></div>
<div class="c c10" style="left:894px;width:45px;"><span class="t k-d10"></span></div>
<div class="c c11 r" style="left:939px;width:81px;"><span class="t k-d11">106374</span></div>
<div class="c c12" style="left:1020px;width:92px;"><span class="t k-d12">PTICO26</span></div>
<div class="c c13" style="left:1112px;width:85px;"><span class="t k-d13">PDC2</span></div>
<div class="c c14" style="left:1197px;width:77px;"><span class="t k-d14">Z1-08-C-B</span></div>
<div class="c c15" style="left:1274px;width:107px;"><span class="t k-d15">PDC2</span></div>
<div class="c c16" style="left:1381px;width:85px;"><span class="t k-d16">SHIP</span></div>
<div class="c c17" style="left:1466px;width:140px;"><span class="t k-d17">STK-SHP</span></div>
<div class="c c18" style="left:1606px;width:139px;"><span class="t k-d18">RELEASED</span></div>
<div class="c c19" style="left:1745px;width:140px;"><span class="t k-d19">106374/2/1</span></div>
</div>
<div class="row wh" style="top:219px">
<div class="c c0" style="left:0;width:34px"><i class="cb"></i></div>
<div class="c c1 r" style="left:34px;width:100px;"><span class="t k-d1">417776</span></div>
<div class="c c2" style="left:134px;width:130px;"><span class="t k-d2">11/07/2025</span></div>
<div class="c c3" style="left:264px;width:83px;"><span class="t k-d3">09:15:52</span></div>
<div class="c c4 r" style="left:347px;width:71px;"><span class="t k-d4">5</span></div>
<div class="c c5" style="left:418px;width:124px;"><span class="t k-p7">29534362</span></div>
<div class="c c6" style="left:542px;width:49px;"><span class="t k-d6"></span></div>
<div class="c c7 r" style="left:591px;width:100px;"><span class="t k-d7">5.00</span></div>
<div class="c c8" style="left:691px;width:76px;"><span class="t k-d8">EA</span></div>
<div class="c c9" style="left:767px;width:127px;"><span class="t k-d9"></span></div>
<div class="c c10" style="left:894px;width:45px;"><span class="t k-d10"></span></div>
<div class="c c11 r" style="left:939px;width:81px;"><span class="t k-d11">106374</span></div>
<div class="c c12" style="left:1020px;width:92px;"><span class="t k-d12">PTICO26</span></div>
<div class="c c13" style="left:1112px;width:85px;"><span class="t k-d13">PDC2</span></div>
<div class="c c14" style="left:1197px;width:77px;"><span class="t k-d14">Z1-07-C-D</span></div>
<div class="c c15" style="left:1274px;width:107px;"><span class="t k-d15">PDC2</span></div>
<div class="c c16" style="left:1381px;width:85px;"><span class="t k-d16">SHIP</span></div>
<div class="c c17" style="left:1466px;width:140px;"><span class="t k-d17">STK-SHP</span></div>
<div class="c c18" style="left:1606px;width:139px;"><span class="t k-d18">RELEASED</span></div>
<div class="c c19" style="left:1745px;width:140px;"><span class="t k-d19">106374/6/1</span></div>
</div>
<div class="row alt" style="top:243px">
<div class="c c0" style="left:0;width:34px"><i class="cb"></i></div>
<div class="c c1 r" style="left:34px;width:100px;"><span class="t k-d1">417777</span></div>
<div class="c c2" style="left:134px;width:130px;"><span class="t k-d2">11/07/2025</span></div>
<div class="c c3" style="left:264px;width:83px;"><span class="t k-d3">09:15:52</span></div>
<div class="c c4 r" style="left:347px;width:71px;"><span class="t k-d4">5</span></div>
<div class="c c5" style="left:418px;width:124px;"><span class="t k-d5">40549</span></div>
<div class="c c6" style="left:542px;width:49px;"><span class="t k-d6"></span></div>
<div class="c c7 r" style="left:591px;width:100px;"><span class="t k-d7">2.00</span></div>
<div class="c c8" style="left:691px;width:76px;"><span class="t k-d8">EA</span></div>
<div class="c c9" style="left:767px;width:127px;"><span class="t k-d9"></span></div>
<div class="c c10" style="left:894px;width:45px;"><span class="t k-d10"></span></div>
<div class="c c11 r" style="left:939px;width:81px;"><span class="t k-d11">106374</span></div>
<div class="c c12" style="left:1020px;width:92px;"><span class="t k-d12">PTICO26</span></div>
<div class="c c13" style="left:1112px;width:85px;"><span class="t k-d13">PDC2</span></div>
<div class="c c14" style="left:1197px;width:77px;"><span class="t k-d14">Z1-05-C-C</span></div>
<div class="c c15" style="left:1274px;width:107px;"><span class="t k-d15">PDC2</span></div>
<div class="c c16" style="left:1381px;width:85px;"><span class="t k-d16">SHIP</span></div>
<div class="c c17" style="left:1466px;width:140px;"><span class="t k-d17">STK-SHP</span></div>
<div class="c c18" style="left:1606px;width:139px;"><span class="t k-d18">RELEASED</span></div>
<div class="c c19" style="left:1745px;width:140px;"><span class="t k-d19">106374/15/1</span></div>
</div>
<div class="row wh" style="top:267px">
<div class="c c0" style="left:0;width:34px"><i class="cb"></i></div>
<div class="c c1 r" style="left:34px;width:100px;"><span class="t k-d1">417960</span></div>
<div class="c c2" style="left:134px;width:130px;"><span class="t k-d2">11/07/2025</span></div>
<div class="c c3" style="left:264px;width:83px;"><span class="t k-d3">08:51:12</span></div>
<div class="c c4 r" style="left:347px;width:71px;"><span class="t k-d4">5</span></div>
<div class="c c5" style="left:418px;width:124px;"><span class="t k-d5">910831</span></div>
<div class="c c6" style="left:542px;width:49px;"><span class="t k-d6"></span></div>
<div class="c c7 r" style="left:591px;width:100px;"><span class="t k-d7">1.00</span></div>
<div class="c c8" style="left:691px;width:76px;"><span class="t k-d8">EA</span></div>
<div class="c c9" style="left:767px;width:127px;"><span class="t k-d9"></span></div>
<div class="c c10" style="left:894px;width:45px;"><span class="t k-d10"></span></div>
<div class="c c11 r" style="left:939px;width:81px;"><span class="t k-d11">106460</span></div>
<div class="c c12" style="left:1020px;width:92px;"><span class="t k-d12">PTICO01</span></div>
<div class="c c13" style="left:1112px;width:85px;"><span class="t k-d13">PDC2</span></div>
<div class="c c14" style="left:1197px;width:77px;"><span class="t k-d14">Z1-03-B-G</span></div>
<div class="c c15" style="left:1274px;width:107px;"><span class="t k-d15">PDC2</span></div>
<div class="c c16" style="left:1381px;width:85px;"><span class="t k-d16">SHIP</span></div>
<div class="c c17" style="left:1466px;width:140px;"><span class="t k-d17">STK-SHP</span></div>
<div class="c c18" style="left:1606px;width:139px;"><span class="t k-d18">RELEASED</span></div>
<div class="c c19" style="left:1745px;width:140px;"><span class="t k-d19">106460/23/1</span></div>
</div>
<div class="row alt" style="top:291px">
<div class="c c0" style="left:0;width:34px"><i class="cb"></i></div>
<div class="c c1 r" style="left:34px;width:100px;"><span class="t k-d1">417879</span></div>
<div class="c c2" style="left:134px;width:130px;"><span class="t k-d2">11/06/2025</span></div>
<div class="c c3" style="left:264px;width:83px;"><span class="t k-d3">11:47:32</span></div>
<div class="c c4 r" style="left:347px;width:71px;"><span class="t k-d4">5</span></div>
<div class="c c5" style="left:418px;width:124px;"><span class="t k-p5">60556-1</span></div>
<div class="c c6" style="left:542px;width:49px;"><span class="t k-d6"></span></div>
<div class="c c7 r" style="left:591px;width:100px;"><span class="t k-d7">8.00</span></div>
<div class="c c8" style="left:691px;width:76px;"><span class="t k-d8">EA</span></div>
<div class="c c9" style="left:767px;width:127px;"><span class="t k-d9"></span></div>
<div class="c c10" style="left:894px;width:45px;"><span class="t k-d10"></span></div>
<div class="c c11 r" style="left:939px;width:81px;"><span class="t k-d11">106246</span></div>
<div class="c c12" style="left:1020px;width:92px;"><span class="t k-d12">PTICO05</span></div>
<div class="c c13" style="left:1112px;width:85px;"><span class="t k-d13">PDC2</span></div>
<div class="c c14" style="left:1197px;width:77px;"><span class="t k-d14">Z2-07-A-C</span></div>
<div class="c c15" style="left:1274px;width:107px;"><span class="t k-d15">PDC2</span></div>
<div class="c c16" style="left:1381px;width:85px;"><span class="t k-d16">SHIP</span></div>
<div class="c c17" style="left:1466px;width:140px;"><span class="t k-d17">STK-SHP</span></div>
<div class="c c18" style="left:1606px;width:139px;"><span class="t k-d18">RELEASED</span></div>
<div class="c c19" style="left:1745px;width:140px;"><span class="t k-d19">106246/14/1</span></div>
</div>
<div class="row wh" style="top:315px">
<div class="c c0" style="left:0;width:34px"><i class="cb"></i></div>
<div class="c c1 r" style="left:34px;width:100px;"><span class="t k-d1">417315</span></div>
<div class="c c2" style="left:134px;width:130px;"><span class="t k-d2">11/04/2025</span></div>
<div class="c c3" style="left:264px;width:83px;"><span class="t k-d3">09:26:13</span></div>
<div class="c c4 r" style="left:347px;width:71px;"><span class="t k-d4">5</span></div>
<div class="c c5" style="left:418px;width:124px;"><span class="t k-p0">4309439RXCORE</span></div>
<div class="c c6" style="left:542px;width:49px;"><span class="t k-d6"></span></div>
<div class="c c7 r" style="left:591px;width:100px;"><span class="t k-d7">2.00</span></div>
<div class="c c8" style="left:691px;width:76px;"><span class="t k-d8">EA</span></div>
<div class="c c9" style="left:767px;width:127px;"><span class="t k-d9"></span></div>
<div class="c c10" style="left:894px;width:45px;"><span class="t k-d10"></span></div>
<div class="c c11 r" style="left:939px;width:81px;"><span class="t k-d11">106202</span></div>
<div class="c c12" style="left:1020px;width:92px;"><span class="t k-d12"></span></div>
<div class="c c13" style="left:1112px;width:85px;"><span class="t k-d13">PDC2</span></div>
<div class="c c14" style="left:1197px;width:77px;"><span class="t k-d14">Z4-07-D-B</span></div>
<div class="c c15" style="left:1274px;width:107px;"><span class="t k-d15">PDC2</span></div>
<div class="c c16" style="left:1381px;width:85px;"><span class="t k-d16">SHIP</span></div>
<div class="c c17" style="left:1466px;width:140px;"><span class="t k-d17">STK-SHP</span></div>
<div class="c c18" style="left:1606px;width:139px;"><span class="t k-d18">RELEASED</span></div>
<div class="c c19" style="left:1745px;width:140px;"><span class="t k-d19">106202/83/1</span></div>
</div>
<div class="row alt" style="top:339px">
<div class="c c0" style="left:0;width:34px"><i class="cb"></i></div>
<div class="c c1 r" style="left:34px;width:100px;"><span class="t k-d1">417316</span></div>
<div class="c c2" style="left:134px;width:130px;"><span class="t k-d2">11/04/2025</span></div>
<div class="c c3" style="left:264px;width:83px;"><span class="t k-d3">09:26:14</span></div>
<div class="c c4 r" style="left:347px;width:71px;"><span class="t k-d4">5</span></div>
<div class="c c5" style="left:418px;width:124px;"><span class="t k-p1">4387657RXCORE</span></div>
<div class="c c6" style="left:542px;width:49px;"><span class="t k-d6"></span></div>
<div class="c c7 r" style="left:591px;width:100px;"><span class="t k-d7">1.00</span></div>
<div class="c c8" style="left:691px;width:76px;"><span class="t k-d8">EA</span></div>
<div class="c c9" style="left:767px;width:127px;"><span class="t k-d9"></span></div>
<div class="c c10" style="left:894px;width:45px;"><span class="t k-d10"></span></div>
<div class="c c11 r" style="left:939px;width:81px;"><span class="t k-d11">106202</span></div>
<div class="c c12" style="left:1020px;width:92px;"><span class="t k-d12"></span></div>
<div class="c c13" style="left:1112px;width:85px;"><span class="t k-d13">PDC2</span></div>
<div class="c c14" style="left:1197px;width:77px;"><span class="t k-d14">Z4-07-A-D</span></div>
<div class="c c15" style="left:1274px;width:107px;"><span class="t k-d15">PDC2</span></div>
<div class="c c16" style="left:1381px;width:85px;"><span class="t k-d16">SHIP</span></div>
<div class="c c17" style="left:1466px;width:140px;"><span class="t k-d17">STK-SHP</span></div>
<div class="c c18" style="left:1606px;width:139px;"><span class="t k-d18">RELEASED</span></div>
<div class="c c19" style="left:1745px;width:140px;"><span class="t k-d19">106202/85/1</span></div>
</div>
<div class="row wh" style="top:363px">
<div class="c c0" style="left:0;width:34px"><i class="cb"></i></div>
<div class="c c1 r" style="left:34px;width:100px;"><span class="t k-d1">417994</span></div>
<div class="c c2" style="left:134px;width:130px;"><span class="t k-d2">11/04/2025</span></div>
<div class="c c3" style="left:264px;width:83px;"><span class="t k-d3">09:16:43</span></div>
<div class="c c4 r" style="left:347px;width:71px;"><span class="t k-d4">5</span></div>
<div class="c c5" style="left:418px;width:124px;"><span class="t k-d5">41188</span></div>
<div class="c c6" style="left:542px;width:49px;"><span class="t k-d6"></span></div>
<div class="c c7 r" style="left:591px;width:100px;"><span class="t k-d7">9.00</span></div>
<div class="c c8" style="left:691px;width:76px;"><span class="t k-d8">EA</span></div>
<div class="c c9" style="left:767px;width:127px;"><span class="t k-d9"></span></div>
<div class="c c10" style="left:894px;width:45px;"><span class="t k-d10"></span></div>
<div class="c c11 r" style="left:939px;width:81px;"><span class="t k-d11">106225</span></div>
<div class="c c12" style="left:1020px;width:92px;"><span class="t k-d12">PTICO02</span></div>
<div class="c c13" style="left:1112px;width:85px;"><span class="t k-d13">PDC2</span></div>
<div class="c c14" style="left:1197px;width:77px;"><span class="t k-d14">Z1-03-C-D</span></div>
<div class="c c15" style="left:1274px;width:107px;"><span class="t k-d15">PDC2</span></div>
<div class="c c16" style="left:1381px;width:85px;"><span class="t k-d16">SHIP</span></div>
<div class="c c17" style="left:1466px;width:140px;"><span class="t k-d17">STK-SHP</span></div>
<div class="c c18" style="left:1606px;width:139px;"><span class="t k-d18">RELEASED</span></div>
<div class="c c19" style="left:1745px;width:140px;"><span class="t k-d19">106225/8/1</span></div>
</div>
<div class="row alt" style="top:387px">
<div class="c c0" style="left:0;width:34px"><i class="cb"></i></div>
<div class="c c1 r" style="left:34px;width:100px;"><span class="t k-d1">417995</span></div>
<div class="c c2" style="left:134px;width:130px;"><span class="t k-d2">11/04/2025</span></div>
<div class="c c3" style="left:264px;width:83px;"><span class="t k-d3">09:16:43</span></div>
<div class="c c4 r" style="left:347px;width:71px;"><span class="t k-d4">5</span></div>
<div class="c c5" style="left:418px;width:124px;"><span class="t k-p2">4309439RX</span></div>
<div class="c c6" style="left:542px;width:49px;"><span class="t k-d6"></span></div>
<div class="c c7 r" style="left:591px;width:100px;"><span class="t k-d7">2.00</span></div>
<div class="c c8" style="left:691px;width:76px;"><span class="t k-d8">EA</span></div>
<div class="c c9" style="left:767px;width:127px;"><span class="t k-d9"></span></div>
<div class="c c10" style="left:894px;width:45px;"><span class="t k-d10"></span></div>
<div class="c c11 r" style="left:939px;width:81px;"><span class="t k-d11">106225</span></div>
<div class="c c12" style="left:1020px;width:92px;"><span class="t k-d12">PTICO02</span></div>
<div class="c c13" style="left:1112px;width:85px;"><span class="t k-d13">PDC2</span></div>
<div class="c c14" style="left:1197px;width:77px;"><span class="t k-d14">Z4-07-A-E</span></div>
<div class="c c15" style="left:1274px;width:107px;"><span class="t k-d15">PDC2</span></div>
<div class="c c16" style="left:1381px;width:85px;"><span class="t k-d16">SHIP</span></div>
<div class="c c17" style="left:1466px;width:140px;"><span class="t k-d17">STK-SHP</span></div>
<div class="c c18" style="left:1606px;width:139px;"><span class="t k-d18">RELEASED</span></div>
<div class="c c19" style="left:1745px;width:140px;"><span class="t k-d19">106225/37/1</span></div>
</div>
<div class="row wh" style="top:411px">
<div class="c c0" style="left:0;width:34px"><i class="cb"></i></div>
<div class="c c1 r" style="left:34px;width:100px;"><span class="t k-d1">417996</span></div>
<div class="c c2" style="left:134px;width:130px;"><span class="t k-d2">11/04/2025</span></div>
<div class="c c3" style="left:264px;width:83px;"><span class="t k-d3">09:16:43</span></div>
<div class="c c4 r" style="left:347px;width:71px;"><span class="t k-d4">5</span></div>
<div class="c c5" style="left:418px;width:124px;"><span class="t k-p0">4309439RXCORE</span></div>
<div class="c c6" style="left:542px;width:49px;"><span class="t k-d6"></span></div>
<div class="c c7 r" style="left:591px;width:100px;"><span class="t k-d7">4.00</span></div>
<div class="c c8" style="left:691px;width:76px;"><span class="t k-d8">EA</span></div>
<div class="c c9" style="left:767px;width:127px;"><span class="t k-d9"></span></div>
<div class="c c10" style="left:894px;width:45px;"><span class="t k-d10"></span></div>
<div class="c c11 r" style="left:939px;width:81px;"><span class="t k-d11">106225</span></div>
<div class="c c12" style="left:1020px;width:92px;"><span class="t k-d12">PTICO02</span></div>
<div class="c c13" style="left:1112px;width:85px;"><span class="t k-d13">PDC2</span></div>
<div class="c c14" style="left:1197px;width:77px;"><span class="t k-d14">Z4-07-D-B</span></div>
<div class="c c15" style="left:1274px;width:107px;"><span class="t k-d15">PDC2</span></div>
<div class="c c16" style="left:1381px;width:85px;"><span class="t k-d16">SHIP</span></div>
<div class="c c17" style="left:1466px;width:140px;"><span class="t k-d17">STK-SHP</span></div>
<div class="c c18" style="left:1606px;width:139px;"><span class="t k-d18">RELEASED</span></div>
<div class="c c19" style="left:1745px;width:140px;"><span class="t k-d19">106225/38/1</span></div>
</div>
<div class="row hov" style="top:435px">
<div class="c c0" style="left:0;width:34px"><i class="cb"></i></div>
<div class="c c1 r" style="left:34px;width:100px;"><span class="t k-d1">417997</span></div>
<div class="c c2" style="left:134px;width:130px;"><span class="t k-d2">11/04/2025</span></div>
<div class="c c3" style="left:264px;width:83px;"><span class="t k-d3">09:16:43</span></div>
<div class="c c4 r" style="left:347px;width:71px;"><span class="t k-d4">5</span></div>
<div class="c c5" style="left:418px;width:124px;"><span class="t k-p3">SP0020K</span></div>
<div class="c c6" style="left:542px;width:49px;"><span class="t k-d6"></span></div>
<div class="c c7 r" style="left:591px;width:100px;"><span class="t k-d7">2.00</span></div>
<div class="c c8" style="left:691px;width:76px;"><span class="t k-d8">EA</span></div>
<div class="c c9" style="left:767px;width:127px;"><span class="t k-d9"></span></div>
<div class="c c10" style="left:894px;width:45px;"><span class="t k-d10"></span></div>
<div class="c c11 r" style="left:939px;width:81px;"><span class="t k-d11">106225</span></div>
<div class="c c12" style="left:1020px;width:92px;"><span class="t k-d12">PTICO02</span></div>
<div class="c c13" style="left:1112px;width:85px;"><span class="t k-d13">PDC2</span></div>
<div class="c c14" style="left:1197px;width:77px;"><span class="t k-d14">Z4-02-C-A</span></div>
<div class="c c15" style="left:1274px;width:107px;"><span class="t k-d15">PDC2</span></div>
<div class="c c16" style="left:1381px;width:85px;"><span class="t k-d16">SHIP</span></div>
<div class="c c17" style="left:1466px;width:140px;"><span class="t k-d17">STK-SHP</span></div>
<div class="c c18" style="left:1606px;width:139px;"><span class="t k-d18">RELEASED</span></div>
<div class="c c19" style="left:1745px;width:140px;"><span class="t k-d19">106225/61/1</span></div>
</div>
<div class="row wh" style="top:459px">
<div class="c c0" style="left:0;width:34px"><i class="cb"></i></div>
<div class="c c1 r" style="left:34px;width:100px;"><span class="t k-d1">417771</span></div>
<div class="c c2" style="left:134px;width:130px;"><span class="t k-d2">10/31/2025</span></div>
<div class="c c3" style="left:264px;width:83px;"><span class="t k-d3">09:15:51</span></div>
<div class="c c4 r" style="left:347px;width:71px;"><span class="t k-d4">5</span></div>
<div class="c c5" style="left:418px;width:124px;"><span class="t k-d5">20031</span></div>
<div class="c c6" style="left:542px;width:49px;"><span class="t k-d6"></span></div>
<div class="c c7 r" style="left:591px;width:100px;"><span class="t k-d7">3.00</span></div>
<div class="c c8" style="left:691px;width:76px;"><span class="t k-d8">EA</span></div>
<div class="c c9" style="left:767px;width:127px;"><span class="t k-d9"></span></div>
<div class="c c10" style="left:894px;width:45px;"><span class="t k-d10"></span></div>
<div class="c c11 r" style="left:939px;width:81px;"><span class="t k-d11">106029</span></div>
<div class="c c12" style="left:1020px;width:92px;"><span class="t k-d12">PTICO26</span></div>
<div class="c c13" style="left:1112px;width:85px;"><span class="t k-d13">PDC2</span></div>
<div class="c c14" style="left:1197px;width:77px;"><span class="t k-d14">Z1-08-C-B</span></div>
<div class="c c15" style="left:1274px;width:107px;"><span class="t k-d15">PDC2</span></div>
<div class="c c16" style="left:1381px;width:85px;"><span class="t k-d16">SHIP</span></div>
<div class="c c17" style="left:1466px;width:140px;"><span class="t k-d17">STK-SHP</span></div>
<div class="c c18" style="left:1606px;width:139px;"><span class="t k-d18">RELEASED</span></div>
<div class="c c19" style="left:1745px;width:140px;"><span class="t k-d19">106029/9/1</span></div>
</div>
<div class="row alt" style="top:483px">
<div class="c c0" style="left:0;width:34px"><i class="cb"></i></div>
<div class="c c1 r" style="left:34px;width:100px;"><span class="t k-d1">417772</span></div>
<div class="c c2" style="left:134px;width:130px;"><span class="t k-d2">10/31/2025</span></div>
<div class="c c3" style="left:264px;width:83px;"><span class="t k-d3">09:15:51</span></div>
<div class="c c4 r" style="left:347px;width:71px;"><span class="t k-d4">5</span></div>
<div class="c c5" style="left:418px;width:124px;"><span class="t k-p8">24061575</span></div>
<div class="c c6" style="left:542px;width:49px;"><span class="t k-d6"></span></div>
<div class="c c7 r" style="left:591px;width:100px;"><span class="t k-d7">1.00</span></div>
<div class="c c8" style="left:691px;width:76px;"><span class="t k-d8">EA</span></div>
<div class="c c9" style="left:767px;width:127px;"><span class="t k-d9"></span></div>
<div class="c c10" style="left:894px;width:45px;"><span class="t k-d10"></span></div>
<div class="c c11 r" style="left:939px;width:81px;"><span class="t k-d11">106029</span></div>
<div class="c c12" style="left:1020px;width:92px;"><span class="t k-d12">PTICO26</span></div>
<div class="c c13" style="left:1112px;width:85px;"><span class="t k-d13">PDC2</span></div>
<div class="c c14" style="left:1197px;width:77px;"><span class="t k-d14">Z4-06-A-F</span></div>
<div class="c c15" style="left:1274px;width:107px;"><span class="t k-d15">PDC2</span></div>
<div class="c c16" style="left:1381px;width:85px;"><span class="t k-d16">SHIP</span></div>
<div class="c c17" style="left:1466px;width:140px;"><span class="t k-d17">STK-SHP</span></div>
<div class="c c18" style="left:1606px;width:139px;"><span class="t k-d18">RELEASED</span></div>
<div class="c c19" style="left:1745px;width:140px;"><span class="t k-d19">106029/11/1</span></div>
</div>
<div class="row wh" style="top:507px">
<div class="c c0" style="left:0;width:34px"><i class="cb"></i></div>
<div class="c c1 r" style="left:34px;width:100px;"><span class="t k-d1">417773</span></div>
<div class="c c2" style="left:134px;width:130px;"><span class="t k-d2">10/31/2025</span></div>
<div class="c c3" style="left:264px;width:83px;"><span class="t k-d3">09:15:52</span></div>
<div class="c c4 r" style="left:347px;width:71px;"><span class="t k-d4">5</span></div>
<div class="c c5" style="left:418px;width:124px;"><span class="t k-p5">60556-1</span></div>
<div class="c c6" style="left:542px;width:49px;"><span class="t k-d6"></span></div>
<div class="c c7 r" style="left:591px;width:100px;"><span class="t k-d7">31.00</span></div>
<div class="c c8" style="left:691px;width:76px;"><span class="t k-d8">EA</span></div>
<div class="c c9" style="left:767px;width:127px;"><span class="t k-d9"></span></div>
<div class="c c10" style="left:894px;width:45px;"><span class="t k-d10"></span></div>
<div class="c c11 r" style="left:939px;width:81px;"><span class="t k-d11">106029</span></div>
<div class="c c12" style="left:1020px;width:92px;"><span class="t k-d12">PTICO26</span></div>
<div class="c c13" style="left:1112px;width:85px;"><span class="t k-d13">PDC2</span></div>
<div class="c c14" style="left:1197px;width:77px;"><span class="t k-d14">Z2-07-A-C</span></div>
<div class="c c15" style="left:1274px;width:107px;"><span class="t k-d15">PDC2</span></div>
<div class="c c16" style="left:1381px;width:85px;"><span class="t k-d16">SHIP</span></div>
<div class="c c17" style="left:1466px;width:140px;"><span class="t k-d17">STK-SHP</span></div>
<div class="c c18" style="left:1606px;width:139px;"><span class="t k-d18">RELEASED</span></div>
<div class="c c19" style="left:1745px;width:140px;"><span class="t k-d19">106029/30/1</span></div>
</div>
<div class="row alt" style="top:531px">
<div class="c c0" style="left:0;width:34px"><i class="cb"></i></div>
<div class="c c1 r" style="left:34px;width:100px;"><span class="t k-d1">417774</span></div>
<div class="c c2" style="left:134px;width:130px;"><span class="t k-d2">10/31/2025</span></div>
<div class="c c3" style="left:264px;width:83px;"><span class="t k-d3">09:15:52</span></div>
<div class="c c4 r" style="left:347px;width:71px;"><span class="t k-d4">5</span></div>
<div class="c c5" style="left:418px;width:124px;"><span class="t k-d5">910831</span></div>
<div class="c c6" style="left:542px;width:49px;"><span class="t k-d6"></span></div>
<div class="c c7 r" style="left:591px;width:100px;"><span class="t k-d7">1.00</span></div>
<div class="c c8" style="left:691px;width:76px;"><span class="t k-d8">EA</span></div>
<div class="c c9" style="left:767px;width:127px;"><span class="t k-d9"></span></div>
<div class="c c10" style="left:894px;width:45px;"><span class="t k-d10"></span></div>
<div class="c c11 r" style="left:939px;width:81px;"><span class="t k-d11">106029</span></div>
<div class="c c12" style="left:1020px;width:92px;"><span class="t k-d12">PTICO26</span></div>
<div class="c c13" style="left:1112px;width:85px;"><span class="t k-d13">PDC2</span></div>
<div class="c c14" style="left:1197px;width:77px;"><span class="t k-d14">Z1-03-B-G</span></div>
<div class="c c15" style="left:1274px;width:107px;"><span class="t k-d15">PDC2</span></div>
<div class="c c16" style="left:1381px;width:85px;"><span class="t k-d16">SHIP</span></div>
<div class="c c17" style="left:1466px;width:140px;"><span class="t k-d17">STK-SHP</span></div>
<div class="c c18" style="left:1606px;width:139px;"><span class="t k-d18">RELEASED</span></div>
<div class="c c19" style="left:1745px;width:140px;"><span class="t k-d19">106029/54/1</span></div>
</div>
<div class="row wh" style="top:555px">
<div class="c c0" style="left:0;width:34px"><i class="cb"></i></div>
<div class="c c1 r" style="left:34px;width:100px;"><span class="t k-d1">417876</span></div>
<div class="c c2" style="left:134px;width:130px;"><span class="t k-d2">10/30/2025</span></div>
<div class="c c3" style="left:264px;width:83px;"><span class="t k-d3">11:47:32</span></div>
<div class="c c4 r" style="left:347px;width:71px;"><span class="t k-d4">5</span></div>
<div class="c c5" style="left:418px;width:124px;"><span class="t k-p4">40191-12RX</span></div>
<div class="c c6" style="left:542px;width:49px;"><span class="t k-d6"></span></div>
<div class="c c7 r" style="left:591px;width:100px;"><span class="t k-d7">2.00</span></div>
<div class="c c8" style="left:691px;width:76px;"><span class="t k-d8">EA</span></div>
<div class="c c9" style="left:767px;width:127px;"><span class="t k-d9"></span></div>
<div class="c c10" style="left:894px;width:45px;"><span class="t k-d10"></span></div>
<div class="c c11 r" style="left:939px;width:81px;"><span class="t k-d11">105911</span></div>
<div class="c c12" style="left:1020px;width:92px;"><span class="t k-d12">PTICO05</span></div>
<div class="c c13" style="left:1112px;width:85px;"><span class="t k-d13">PDC2</span></div>
<div class="c c14" style="left:1197px;width:77px;"><span class="t k-d14">Z3-05-B-A</span></div>
<div class="c c15" style="left:1274px;width:107px;"><span class="t k-d15">PDC2</span></div>
<div class="c c16" style="left:1381px;width:85px;"><span class="t k-d16">SHIP</span></div>
<div class="c c17" style="left:1466px;width:140px;"><span class="t k-d17">STK-SHP</span></div>
<div class="c c18" style="left:1606px;width:139px;"><span class="t k-d18">RELEASED</span></div>
<div class="c c19" style="left:1745px;width:140px;"><span class="t k-d19">105911/38/1</span></div>
</div>
<div class="row alt" style="top:579px">
<div class="c c0" style="left:0;width:34px"></div>
<div class="c c1 r" style="left:34px;width:100px;"><span class="t k-d1"></span></div>
<div class="c c2" style="left:134px;width:130px;"><span class="t k-d2"></span></div>
<div class="c c3" style="left:264px;width:83px;"><span class="t k-d3"></span></div>
<div class="c c4 r" style="left:347px;width:71px;"><span class="t k-d4"></span></div>
<div class="c c5" style="left:418px;width:124px;"><span class="t k-d5"></span></div>
<div class="c c6" style="left:542px;width:49px;"><span class="t k-d6"></span></div>
<div class="c c7 r" style="left:591px;width:100px;"><span class="t k-d7"></span></div>
<div class="c c8" style="left:691px;width:76px;"><span class="t k-d8"></span></div>
<div class="c c9" style="left:767px;width:127px;"><span class="t k-d9"></span></div>
<div class="c c10" style="left:894px;width:45px;"><span class="t k-d10"></span></div>
<div class="c c11 r" style="left:939px;width:81px;"><span class="t k-d11"></span></div>
<div class="c c12" style="left:1020px;width:92px;"><span class="t k-d12"></span></div>
<div class="c c13" style="left:1112px;width:85px;"><span class="t k-d13"></span></div>
<div class="c c14" style="left:1197px;width:77px;"><span class="t k-d14"></span></div>
<div class="c c15" style="left:1274px;width:107px;"><span class="t k-d15"></span></div>
<div class="c c16" style="left:1381px;width:85px;"><span class="t k-d16"></span></div>
<div class="c c17" style="left:1466px;width:140px;"><span class="t k-d17"></span></div>
<div class="c c18" style="left:1606px;width:139px;"><span class="t k-d18"></span></div>
<div class="c c19" style="left:1745px;width:140px;"><span class="t k-d19"></span></div>
</div>
<div class="abs" style="left:763px;top:145.5px;width:132px;height:50.5px;background:#ffa800"></div>
<div class="abs" style="left:764px;top:286.20000000000005px;width:131px;height:77.5px;background:#ffa800"></div>
<svg class="abs" style="left:0;top:0" width="1829" height="583" viewBox="70 342 1829 583"><path d="M1086.6 500.5 Q1105 497 1125 495.2 L1170.1 495.3 L1170.1 507.3 L1123 507.4 Q1103 509.5 1090 512.5 L1086.7 512.6 Z" fill="#ede400"/><path d="M1091.8 666.3 L1157 666.4 Q1166 666.6 1172.4 667.4 L1172.4 679.3 Q1165 678.6 1157 678.4 L1091.8 678.3 Z" fill="#ffe500"/><path d="M1087.7 688.4 L1120 688.6 Q1145 689.6 1166.2 692.8 L1166.2 704.8 Q1142 701 1115 700.3 L1087.7 700.1 Z" fill="#ede400"/></svg>
</div>
<div class="abs" style="left:69px;top:342px;width:1840px;height:1px;background:#cfd5d8"></div>
<div class="abs" style="left:1899px;top:342px;width:10px;height:75px;background:#e4eaee"></div>
<div class="abs" style="left:1899px;top:417px;width:10px;height:508px;background:#f1f1f1"></div>
<div class="abs" style="left:1899px;top:417px;width:10px;height:346px;background:#cbcbcb"></div>
<div class="abs" style="left:69px;top:925px;width:1830px;height:10px;background:#f1f1f1"></div>
<div class="abs" style="left:69px;top:925px;width:1315px;height:10px;background:#c9c9c9"></div>
<div class="abs" style="left:1899px;top:925px;width:10px;height:10px;background:#fff"></div>
</body></html>
